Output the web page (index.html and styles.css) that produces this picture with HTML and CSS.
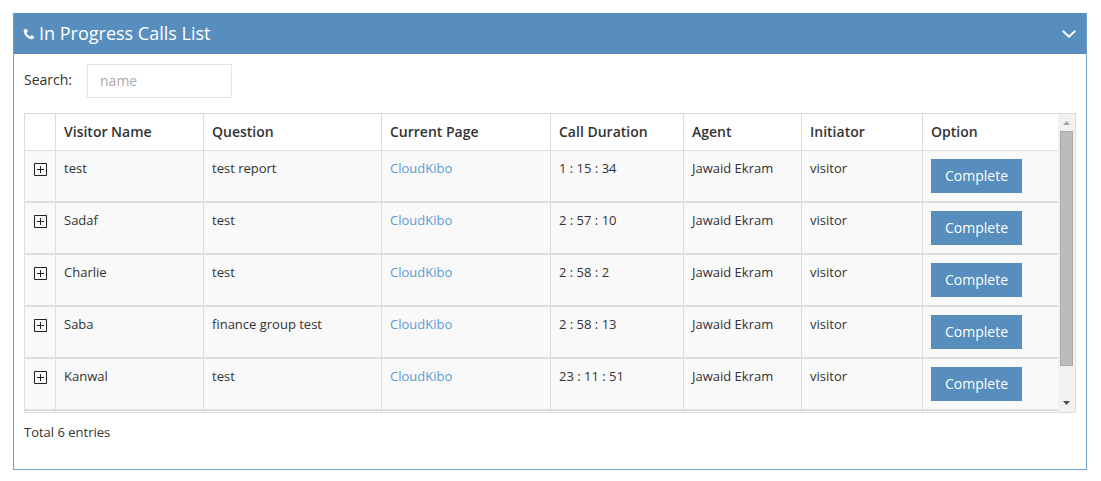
FILE: index.html
```html
<!DOCTYPE html>
<html lang="en">
<head>
<meta charset="utf-8">
<meta name="viewport" content="width=device-width, initial-scale=1">
<title>In Progress Calls List</title>
<link rel="stylesheet" href="styles.css">
</head>
<body>
<svg class="symbols" aria-hidden="true">
  <symbol id="expand" viewBox="0 0 13 13"><path d="M.5 .5h12v12h-12zM6.5 3v7M3 6.5h7" fill="none" stroke="#222" stroke-width="1"/></symbol>
</svg>
<section class="panel">
  <header class="panel-header">
    <h1 class="panel-title">
      <svg class="phone" viewBox="0 0 1408 1408" aria-hidden="true"><path fill="#fff" stroke="#fff" stroke-width="70" d="M1408 1112q0 27-10 70.500t-21 68.500q-21 50-122 106-94 51-186 51-27 0-53-3.500t-57.500-12.500-47-14.500-55.500-20.500-49-18q-98-35-175-83-127-79-264-216t-216-264q-48-77-83-175-3-9-18-49t-20.500-55.500-14.500-47-12.500-57.500-3.500-53q0-92 51-186 56-101 106-122 25-11 68.500-21t70.500-10q14 0 21 3 18 6 53 76 11 19 30 54t35 63.500 31 53.500q3 4 17.500 25t21.500 35.500 7 28.500q0 20-28.500 50t-62 55-62 53-28.500 46q0 9 5 22.500t8.500 20.500 14 24 11.500 19q76 137 174 235t235 174q2 1 19 11.500t24 14 20.500 8.500 22.500 5q18 0 46-28.500t53-62 55-62 50-28.500q14 0 28.500 7t35.500 21.500 25 17.500q25 15 53.500 31t63.500 35 54 30q70 35 76 53 3 7 3 21z"/></svg>
      In Progress Calls List
    </h1>
    <button class="collapse" type="button" aria-label="Collapse">
      <svg class="chevron" viewBox="0 0 14 8" aria-hidden="true"><path d="M.7 .7L7 6.700L13.300 .7" fill="none" stroke="#fff" stroke-width="1.900"/></svg>
    </button>
  </header>
  <div class="panel-body">
    <div class="search">
      <label for="name">Search:</label>
      <input class="search-input" id="name" type="text" placeholder="name">
    </div>
    <div class="table-frame">
      <div class="table-scroll">
        <table class="calls">
          <colgroup><col class="col-toggle"><col class="col-name"><col class="col-question"><col class="col-page"><col class="col-duration"><col class="col-agent"><col class="col-initiator"><col class="col-option"></colgroup>
          <thead>
            <tr><th></th><th>Visitor Name</th><th>Question</th><th>Current Page</th><th>Call Duration</th><th>Agent</th><th>Initiator</th><th>Option</th></tr>
          </thead>
          <tbody>
            <tr><td><button class="toggle" type="button" aria-label="Show details"><svg class="plus"><use href="#expand"/></svg></button></td><td>test</td><td>test report</td><td><a href="#">CloudKibo</a></td><td>1 : 15 : 34</td><td>Jawaid Ekram</td><td>visitor</td><td><button class="complete" type="button">Complete</button></td></tr>
            <tr><td><button class="toggle" type="button" aria-label="Show details"><svg class="plus"><use href="#expand"/></svg></button></td><td>Sadaf</td><td>test</td><td><a href="#">CloudKibo</a></td><td>2 : 57 : 10</td><td>Jawaid Ekram</td><td>visitor</td><td><button class="complete" type="button">Complete</button></td></tr>
            <tr><td><button class="toggle" type="button" aria-label="Show details"><svg class="plus"><use href="#expand"/></svg></button></td><td>Charlie</td><td>test</td><td><a href="#">CloudKibo</a></td><td>2 : 58 : 2</td><td>Jawaid Ekram</td><td>visitor</td><td><button class="complete" type="button">Complete</button></td></tr>
            <tr><td><button class="toggle" type="button" aria-label="Show details"><svg class="plus"><use href="#expand"/></svg></button></td><td>Saba</td><td>finance group test</td><td><a href="#">CloudKibo</a></td><td>2 : 58 : 13</td><td>Jawaid Ekram</td><td>visitor</td><td><button class="complete" type="button">Complete</button></td></tr>
            <tr><td><button class="toggle" type="button" aria-label="Show details"><svg class="plus"><use href="#expand"/></svg></button></td><td>Kanwal</td><td>test</td><td><a href="#">CloudKibo</a></td><td>23 : 11 : 51</td><td>Jawaid Ekram</td><td>visitor</td><td><button class="complete" type="button">Complete</button></td></tr>
            <tr class="row-empty"><td></td><td></td><td></td><td></td><td></td><td></td><td></td><td></td></tr>
          </tbody>
        </table>
      </div>
      <div class="scrollbar" aria-hidden="true">
        <svg class="arrow" viewBox="0 0 17 17"><path d="M5 11h7L8.500 7z" fill="#a3a3a3"/></svg>
        <div class="track"><div class="thumb"></div></div>
        <svg class="arrow" viewBox="0 0 17 17"><path d="M5 6h7L8.500 10z" fill="#505050"/></svg>
      </div>
    </div>
    <p class="total">Total 6 entries</p>
  </div>
</section>
</body>
</html>
```
FILE: styles.css
```css
* {
  box-sizing: border-box;
}

body {
  margin: 0;
  padding: 13px 14px 11px 13px;
  background: #fff;
  color: #333;
  font-family: "Open Sans", sans-serif;
  font-size: 13px;
  line-height: 18px;
}

button {
  border: 0;
  padding: 0;
  background: none;
  font: inherit;
  cursor: pointer;
}

a {
  color: #5b9bd1;
  text-decoration: none;
}

.symbols {
  display: none;
}

.panel {
  border: 1px solid #72a2cc;
  border-top: 0;
}

.panel-header {
  display: flex;
  align-items: center;
  justify-content: space-between;
  height: 41px;
  padding: 0 10px;
  background: #578ebe;
  color: #fff;
}

.panel-title {
  display: flex;
  align-items: center;
  gap: 5px;
  margin: 0;
  padding-bottom: 2px;
  font-size: 18px;
  font-weight: 400;
  line-height: 24px;
}

.phone {
  width: 10px;
  height: 10px;
  margin-top: 2px;
  overflow: visible;
}

.collapse {
  display: flex;
}

.chevron {
  width: 14px;
  height: 8px;
}

.panel-body {
  padding: 10px 10px 28px;
}

.search {
  display: flex;
  gap: 15px;
  margin-bottom: 15px;
  font-size: 14px;
  line-height: 20px;
}

.search label {
  padding-top: 6px;
}

.search-input {
  width: 145px;
  height: 34px;
  padding: 5px 12px 7px;
  border: 1px solid #e5e5e5;
  color: #333;
  font: inherit;
}

.search-input::placeholder {
  color: #aaa;
}

.table-frame {
  display: flex;
  height: 300px;
  border: 1px solid #ddd;
}

.table-scroll {
  flex: 1;
  overflow-y: auto;
  scrollbar-width: none;
}

.calls {
  width: 100%;
  table-layout: fixed;
  border-collapse: separate;
  border-spacing: 0;
}

.col-toggle { width: 31px; }
.col-name { width: 148px; }
.col-question { width: 178px; }
.col-page { width: 169px; }
.col-duration { width: 133px; }
.col-agent { width: 118px; }
.col-initiator { width: 121px; }
.col-option { width: 135px; }

.calls th,
.calls td {
  padding: 8px;
  border-right: 1px solid #ddd;
  text-align: left;
  vertical-align: top;
}

.calls th {
  border-bottom: 1px solid #ddd;
  font-size: 14px;
  font-weight: 600;
  line-height: 20px;
}

.calls td {
  border-bottom: 2px solid #ddd;
  background: #f9f9f9;
}

.calls th:last-child,
.calls td:last-child {
  border-right: 0;
}

.row-empty td {
  height: 52px;
}

.toggle {
  display: flex;
  padding: 4px 1px;
}

.plus {
  width: 13px;
  height: 13px;
}

.complete {
  display: block;
  height: 34px;
  padding: 0 14px;
  background: #578ebe;
  color: #fff;
  font-size: 14px;
}

.scrollbar {
  display: flex;
  flex-direction: column;
  width: 17px;
  background: #f1f1f1;
}

.arrow {
  width: 17px;
  height: 17px;
}

.track {
  flex: 1;
  padding: 0 2px;
}

.thumb {
  width: 13px;
  height: 89%;
  border: 1px solid #a8a8a8;
  background: #bcbcbc;
}

.total {
  margin: 10px 0 0;
}
```
